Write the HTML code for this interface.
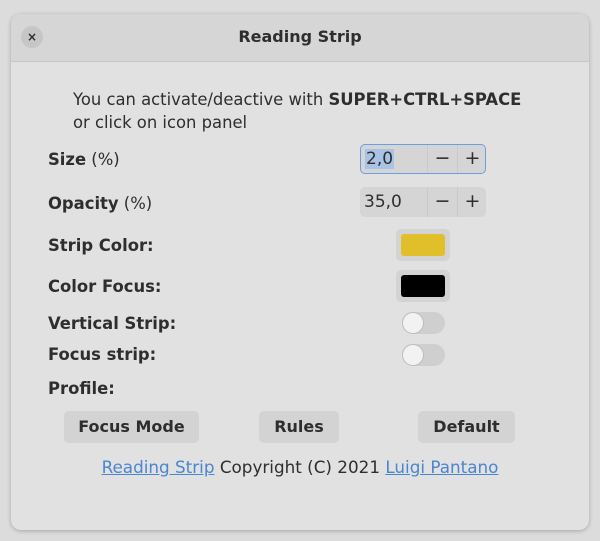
<!DOCTYPE html>
<html><head><style>
body{margin:0;width:600px;height:541px;background:#dcdcdc;font-family:"DejaVu Sans","Liberation Sans",sans-serif;color:#2e2e2e;position:relative;overflow:hidden}
.win{position:absolute;left:11px;top:14px;width:578px;height:516px;background:#e1e1e1;border-radius:10px;box-shadow:0 1px 4px rgba(0,0,0,.25);overflow:hidden}
.hdr{position:absolute;left:0;top:0;width:578px;height:47px;background:#d6d6d6;border-bottom:1px solid #c8c8c8}
.t{position:absolute;font-size:16.4px;white-space:nowrap}
.b{font-weight:bold}
.close{position:absolute;left:10px;top:12px;width:22px;height:22px;border-radius:50%;background:#c6c6c6;font-size:12px;text-align:center;line-height:22px;font-weight:bold}
.spin{position:absolute;left:349px;width:126px;height:30px;background:#d5d5d5;border-radius:5px}
.spin .v{position:absolute;left:4px;top:5px;font-size:17px}
.spin .m,.spin .p{position:absolute;top:0;width:29px;height:30px;border-left:1px solid #c9c9c9;text-align:center;line-height:29px;font-size:19px}
.sw{position:absolute;left:385px;width:54px;height:32px;background:#d3d3d3;border-radius:5px}
.sw div{position:absolute;left:5px;top:5px;width:44px;height:22px;border-radius:3px}
.tg{position:absolute;left:391px;width:43px;height:22px;background:#cfcfcf;border-radius:11px}
.tg div{position:absolute;left:0;top:0;width:20px;height:20px;border-radius:50%;background:#f2f2f2;border:1px solid #bdbdbd}
.btn{position:absolute;top:397px;height:32px;background:#d3d3d3;border-radius:5px;font-weight:bold;font-size:16px;text-align:center;line-height:32px}
a{color:#4a86cf;text-decoration:underline}
</style></head><body>
<div class="win">
<div class="hdr"><div class="close">×</div><div class="t b" style="left:0;width:578px;text-align:center;top:13px;font-size:16px">Reading Strip</div></div>
<div class="t" style="left:62px;top:76px">You can activate/deactive with <span class="b">SUPER+CTRL+SPACE</span></div>
<div class="t" style="left:62px;top:99px">or click on icon panel</div>
<div class="t" style="left:37px;top:136px"><span class="b">Size</span> (%)</div>
<div class="spin" style="top:130px;border:1px solid #6d9ee0;width:124px;height:28px"><div class="v" style="top:4px;background:#a9c3e6;padding:0 1px">2,0</div><div class="m" style="left:66px;height:28px;line-height:27px">−</div><div class="p" style="left:96px;height:28px;line-height:27px">+</div></div>
<div class="t" style="left:37px;top:180px"><span class="b">Opacity</span> (%)</div>
<div class="spin" style="top:173px"><div class="v">35,0</div><div class="m" style="left:67px">−</div><div class="p" style="left:97px">+</div></div>
<div class="t b" style="left:37px;top:222px">Strip Color:</div>
<div class="sw" style="top:215px"><div style="background:#e0bf2a"></div></div>
<div class="t b" style="left:37px;top:263px">Color Focus:</div>
<div class="sw" style="top:256px"><div style="background:#000"></div></div>
<div class="t b" style="left:37px;top:300px">Vertical Strip:</div>
<div class="tg" style="top:298px"><div></div></div>
<div class="t b" style="left:37px;top:331px">Focus strip:</div>
<div class="tg" style="top:330px"><div></div></div>
<div class="t b" style="left:37px;top:365px">Profile:</div>
<div class="btn" style="left:53px;width:135px">Focus Mode</div>
<div class="btn" style="left:248px;width:80px">Rules</div>
<div class="btn" style="left:407px;width:97px">Default</div>
<div class="t" style="left:0;width:578px;text-align:center;top:443px;font-size:16.8px"><a>Reading Strip</a> Copyright (C) 2021 <a>Luigi Pantano</a></div>
</div>
</body></html>
